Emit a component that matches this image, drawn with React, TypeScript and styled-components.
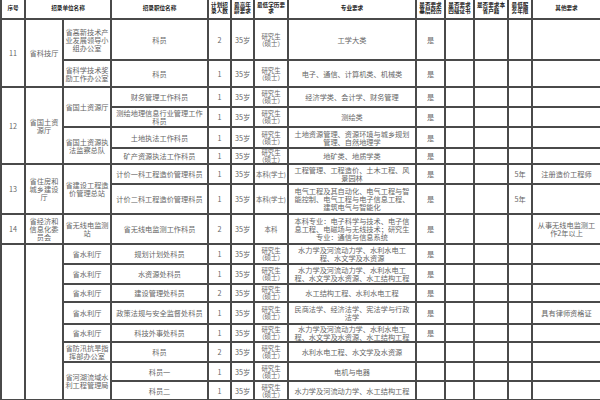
import React from "react";
import styled, { createGlobalStyle } from "styled-components";

const GlobalStyle = createGlobalStyle`
  html, body {
    margin: 0;
    padding: 0;
    background: #ffffff;
  }
  body {
    font-family: "Noto Sans CJK SC", "Liberation Serif", serif;
    overflow: hidden;
  }
`;

type Cell = { t: string; s?: number };

type Row = {
  h: number;
  no?: Cell;
  unit?: Cell;
  sub?: Cell;
  pos: string;
  n: string;
  edu: string;
  major: string;
  c1?: string;
  years?: string;
  other?: string;
};

const colWidths = [24, 38, 48, 97, 23, 23, 34, 128, 29, 29, 34, 24, 69];

const heads = [
  "序号",
  "招录单位名称",
  "招录职位名称",
  "计划招录人数",
  "最高年龄要求",
  "最低学历要求",
  "专业要求",
  "是否要求基层经历",
  "是否要求四级证书",
  "是否要求本省户籍",
  "最低服务年限",
  "其他要求",
];

const MS = "研究生（硕士）";

const rows: Row[] = [
  { h: 41, no: { t: "11", s: 2 }, unit: { t: "省科技厅", s: 2 }, sub: { t: "省高新技术产业发展领导小组办公室" }, pos: "科员", n: "2", edu: MS, major: "工学大类", c1: "是" },
  { h: 27, sub: { t: "省科学技术奖励工作办公室" }, pos: "科员", n: "1", edu: MS, major: "电子、通信、计算机类、机械类", c1: "是" },
  { h: 20, no: { t: "12", s: 4 }, unit: { t: "省国土资源厅", s: 4 }, sub: { t: "省国土资源厅", s: 2 }, pos: "财务管理工作科员", n: "1", edu: MS, major: "经济学类、会计学、财务管理", c1: "是" },
  { h: 20, pos: "测绘地理信息行业管理工作科员", n: "1", edu: MS, major: "测绘类", c1: "是" },
  { h: 21, sub: { t: "省国土资源执法监察总队", s: 2 }, pos: "土地执法工作科员", n: "1", edu: MS, major: "土地资源管理、资源环境与城乡规划管理、自然地理学", c1: "是" },
  { h: 16, pos: "矿产资源执法工作科员", n: "1", edu: MS, major: "地矿类、地质学类", c1: "是" },
  { h: 20, no: { t: "13", s: 2 }, unit: { t: "省住房和城乡建设厅", s: 2 }, sub: { t: "省建设工程造价管理总站", s: 2 }, pos: "计价一科工程造价管理科员", n: "1", edu: "本科(学士)", major: "工程管理、工程造价、土木工程、风景园林", c1: "是", years: "5年", other: "注册造价工程师" },
  { h: 30, pos: "计价二科工程造价管理科员", n: "1", edu: "本科(学士)", major: "电气工程及其自动化、电气工程与智能控制、电气工程与电子信息工程、建筑电气与智能化", c1: "是", years: "5年" },
  { h: 30, no: { t: "14" }, unit: { t: "省经济和信息化委员会" }, sub: { t: "省无线电监测站" }, pos: "省无线电监测工作科员", n: "2", edu: "本科", major: "本科专业：电子科学与技术、电子信息工程、电磁场与无线技术；研究生专业：通信与信息系统", c1: "是", other: "从事无线电监测工作2年以上" },
  { h: 20, no: { t: "", s: 8 }, unit: { t: "", s: 8 }, sub: { t: "省水利厅" }, pos: "规划计划处科员", n: "1", edu: MS, major: "水力学及河流动力学、水利水电工程、水文学及水资源", c1: "是" },
  { h: 20, sub: { t: "省水利厅" }, pos: "水资源处科员", n: "1", edu: MS, major: "水力学及河流动力学、水利水电工程、水文学及水资源、水工结构工程", c1: "是" },
  { h: 18, sub: { t: "省水利厅" }, pos: "建设管理处科员", n: "2", edu: MS, major: "水工结构工程、水利水电工程", c1: "是" },
  { h: 22, sub: { t: "省水利厅" }, pos: "政策法规与安全监督处科员", n: "1", edu: MS, major: "民商法学、经济法学、宪法学与行政法学", c1: "是", other: "具有律师资格证" },
  { h: 18, sub: { t: "省水利厅" }, pos: "科技外事处科员", n: "1", edu: MS, major: "水力学及河流动力学、水利水电工程、水文学及水资源、水工结构工程", c1: "是" },
  { h: 20, sub: { t: "省防汛抗旱指挥部办公室" }, pos: "科员", n: "2", edu: MS, major: "水利水电工程、水文学及水资源" },
  { h: 19, sub: { t: "省河湖流域水利工程管理局", s: 2 }, pos: "科员一", n: "1", edu: MS, major: "电机与电器" },
  { h: 19, pos: "科员二", n: "1", edu: MS, major: "水力学及河流动力学、水工结构工程" },
];

export default function App() {
  return (
    <Page>
      <GlobalStyle />
      <Sheet $cols={colWidths} $rows={[20, ...rows.map((r) => r.h)]}>
        {heads.map((h, i) => (
          <HeadCell key={h} $colSpan={i === 1 ? 2 : 1}>
            {h}
          </HeadCell>
        ))}
        {rows.map((r, i) => (
          <React.Fragment key={i}>
            {r.no && <BodyCell $rowSpan={r.no.s}>{r.no.t}</BodyCell>}
            {r.unit && <BodyCell $rowSpan={r.unit.s}>{r.unit.t}</BodyCell>}
            {r.sub && <BodyCell $rowSpan={r.sub.s} $tight>{r.sub.t}</BodyCell>}
            <BodyCell>{r.pos}</BodyCell>
            <BodyCell>{r.n}</BodyCell>
            <BodyCell $nowrap>35岁</BodyCell>
            <EduCell>{r.edu}</EduCell>
            <BodyCell>{r.major}</BodyCell>
            <BodyCell>{r.c1}</BodyCell>
            <BodyCell />
            <BodyCell />
            <BodyCell $nowrap>{r.years}</BodyCell>
            <BodyCell>{r.other}</BodyCell>
          </React.Fragment>
        ))}
      </Sheet>
    </Page>
  );
}

const Page = styled.div`
  width: 600px;
  height: 400px;
  overflow: hidden;
  background: #fff;
`;

const Sheet = styled.div<{ $cols: number[]; $rows: number[] }>`
  display: grid;
  grid-template-columns: ${(p) => p.$cols.map((c) => `${c}px`).join(" ")};
  grid-template-rows: ${(p) => p.$rows.map((r) => `${r}px`).join(" ")};
  border-left: 2px solid #4a4a4a;
  box-sizing: border-box;
`;

const BaseCell = styled.div`
  box-sizing: border-box;
  display: flex;
  align-items: center;
  justify-content: center;
  text-align: center;
  overflow: hidden;
  border-right: 2px solid #4a4a4a;
  border-bottom: 2px solid #4a4a4a;
  padding: 0 2px;
  word-break: break-all;
`;

const HeadCell = styled(BaseCell)<{ $colSpan: number }>`
  grid-column: span ${(p) => p.$colSpan};
  font-size: 5.6px;
  line-height: 5.8px;
  font-weight: 700;
  color: #222;
`;

const BodyCell = styled(BaseCell)<{ $rowSpan?: number; $nowrap?: boolean; $tight?: boolean }>`
  grid-row: span ${(p) => p.$rowSpan ?? 1};
  font-size: 7.2px;
  line-height: 8px;
  color: #666;
  padding: ${(p) => (p.$tight ? "0 1px" : "0 2px")};
  white-space: ${(p) => (p.$nowrap ? "nowrap" : "normal")};
`;

const EduCell = styled(BaseCell)`
  font-size: 6.4px;
  line-height: 7px;
  color: #666;
  padding: 0 1px;
`;
